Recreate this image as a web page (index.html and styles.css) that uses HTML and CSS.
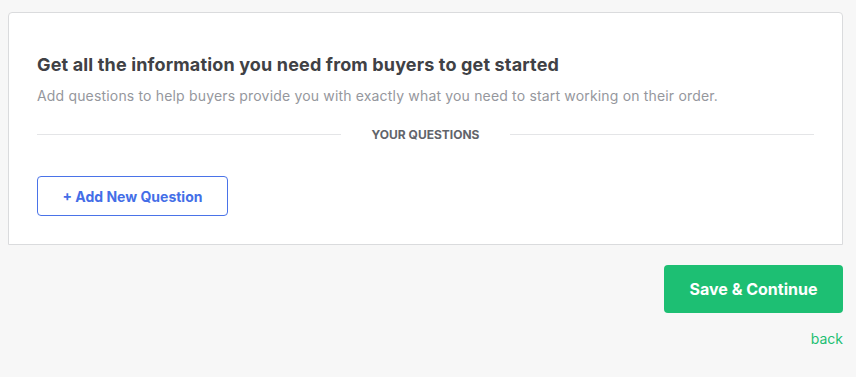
FILE: index.html
```html
<!DOCTYPE html>
<html>
<head>
<meta charset="utf-8">
<link rel="stylesheet" href="styles.css">
</head>
<body>
<div class="page">
  <section class="card">
    <h2 class="title">Get all the information you need from buyers to get started</h2>
    <p class="subtitle">Add questions to help buyers provide you with exactly what you need to start working on their order.</p>
    <div class="divider"><span class="line"></span><span class="label">YOUR QUESTIONS</span><span class="line"></span></div>
    <button class="add-btn">+ Add New Question</button>
  </section>
  <div class="actions">
    <button class="save-btn">Save &amp; Continue</button>
    <a class="back" href="#">back</a>
  </div>
</div>
</body>
</html>
```
FILE: styles.css
```css
html, body {
  margin: 0;
  padding: 0;
  background: #f7f7f7;
  font-family: "Inter", "Liberation Sans", Arial, sans-serif;
}
.page {
  width: 835px;
  padding: 12px 0 0 8px;
}
.card {
  background: #fff;
  border: 1px solid #dadbdd;
  border-radius: 4px 4px 0 0;
  padding: 39px 28px 28px 28px;
  height: 164px;
}
.title {
  margin: 0;
  font-size: 18px;
  font-weight: 700;
  color: #404145;
  line-height: 26px;
  letter-spacing: 0.15px;
}
.subtitle {
  margin: 7px 0 0 0;
  font-size: 14px;
  color: #95979d;
  line-height: 22px;
  letter-spacing: 0.17px;
}
.divider {
  display: flex;
  align-items: center;
  margin-top: 18px;
  height: 18px;
}
.line {
  flex: 1;
  height: 1px;
  background: #e4e5e7;
}
.label {
  padding: 0 31px;
  font-size: 12px;
  font-weight: 700;
  color: #62646a;
}
.add-btn {
  margin-top: 33px;
  width: 191px;
  height: 40px;
  background: #fff;
  border: 1px solid #4a73e8;
  border-radius: 4px;
  color: #446ee7;
  font-family: inherit;
  font-size: 14px;
  font-weight: 700;
  cursor: pointer;
}
.actions {
  display: flex;
  flex-direction: column;
  align-items: flex-end;
  margin-top: 20px;
}
.save-btn {
  width: 179px;
  height: 48px;
  background: #1dbf73;
  border: none;
  border-radius: 4px;
  color: #fff;
  font-family: inherit;
  font-size: 16px;
  font-weight: 700;
}
.back {
  margin-top: 17px;
  color: #1dbf73;
  font-size: 14px;
  text-decoration: none;
  line-height: 18px;
}
```
